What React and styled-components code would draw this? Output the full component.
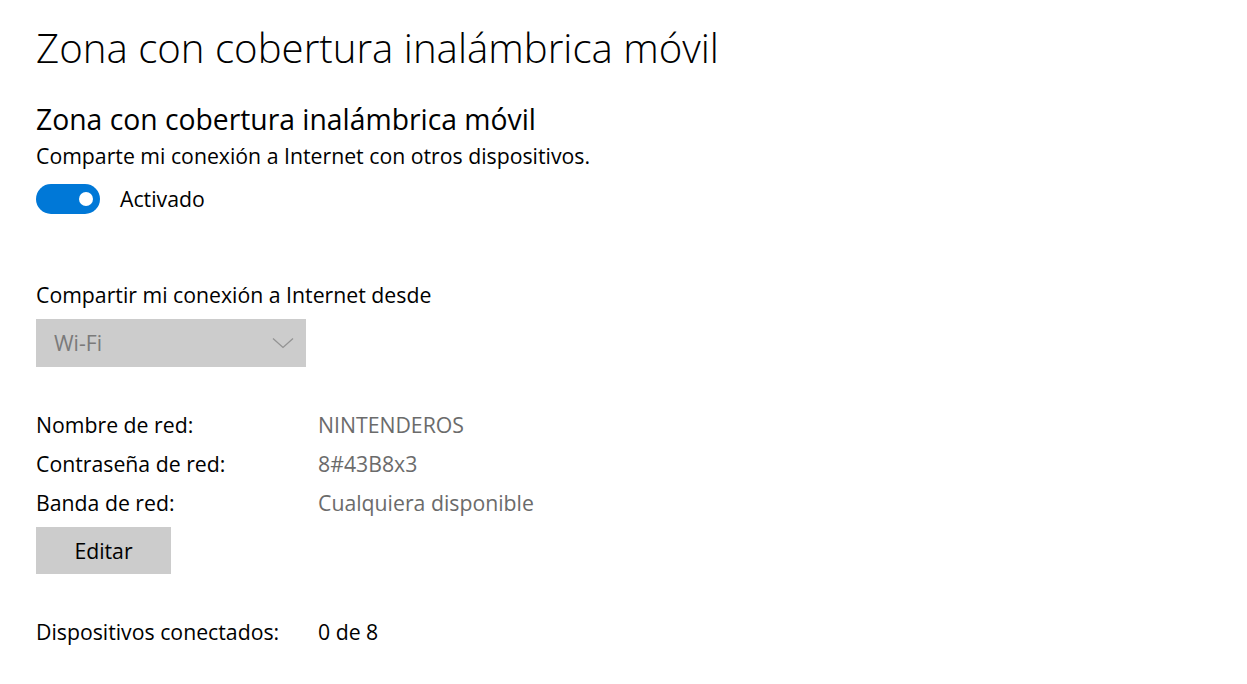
import React from "react";
import styled, { createGlobalStyle } from "styled-components";

const GlobalStyle = createGlobalStyle`
  html, body {
    margin: 0;
    padding: 0;
    background: #ffffff;
  }
  body {
    font-family: "Open Sans", "Noto Sans", sans-serif;
    color: #000000;
    -webkit-font-smoothing: antialiased;
  }
`;

const Page = styled.main`
  display: flex;
  flex-direction: column;
  align-items: flex-start;
  padding: 20px 0 0 36px;
  min-height: 684px;
  box-sizing: border-box;
`;

const PageTitle = styled.h1`
  margin: 0;
  font-size: 40.2px;
  font-weight: 300;
  line-height: 56px;
  color: #000;
`;

const SectionTitle = styled.h2`
  margin: 23px 0 0;
  font-size: 28.3px;
  font-weight: 400;
  line-height: 40px;
  color: #000;
`;

const Text = styled.p`
  margin: ${(p) => p.$top || 0}px 0 0;
  font-size: 21.25px;
  line-height: 30px;
  color: #000;
`;

const ToggleRow = styled.label`
  display: flex;
  align-items: center;
  gap: 20px;
  margin-top: 13px;
  font-size: 21.25px;
  line-height: 30px;
`;

const Track = styled.span`
  position: relative;
  display: block;
  width: 64px;
  height: 30px;
  border-radius: 15px;
  background: #0078d7;
  box-sizing: border-box;
`;

const Knob = styled.span`
  position: absolute;
  top: 8px;
  right: 7px;
  width: 14px;
  height: 14px;
  border-radius: 50%;
  background: #ffffff;
`;

const Select = styled.div`
  display: flex;
  align-items: center;
  justify-content: space-between;
  margin-top: 9px;
  width: 270px;
  height: 48px;
  padding: 0 12px 0 18px;
  box-sizing: border-box;
  background: #cccccc;
  color: #7a7a7a;
  font-size: 21.25px;
  line-height: 48px;
`;

const InfoList = styled.dl`
  display: grid;
  grid-template-columns: 282px auto;
  margin: 38px 0 0;
  font-size: 21.25px;
  line-height: 39px;
`;

const Term = styled.dt`
  margin: 0;
  color: #000;
`;

const Value = styled.dd`
  margin: 0;
  color: ${(p) => (p.$muted ? "#6b6b6b" : "#000")};
`;

const Button = styled.button`
  margin-top: 5px;
  width: 135px;
  height: 47px;
  padding: 0;
  border: none;
  background: #cccccc;
  font-family: inherit;
  font-size: 21.25px;
  line-height: 47px;
  color: #000;
`;

const DeviceList = styled(InfoList)`
  margin-top: 43px;
  line-height: 30px;
`;

const Chevron = () => (
  <svg width="22" height="12" viewBox="0 0 22 12" fill="none">
    <path d="M1 1.5 L11 10.5 L21 1.5" stroke="#939393" strokeWidth="1.3" />
  </svg>
);

export default function App() {
  return (
    <>
      <GlobalStyle />
      <Page>
        <PageTitle>Zona con cobertura inalámbrica móvil</PageTitle>
        <SectionTitle>Zona con cobertura inalámbrica móvil</SectionTitle>
        <Text $top={2}>Comparte mi conexión a Internet con otros dispositivos.</Text>
        <ToggleRow>
          <Track>
            <Knob />
          </Track>
          Activado
        </ToggleRow>
        <Text $top={66}>Compartir mi conexión a Internet desde</Text>
        <Select>
          <span>Wi-Fi</span>
          <Chevron />
        </Select>
        <InfoList>
          <Term>Nombre de red:</Term>
          <Value $muted>NINTENDEROS</Value>
          <Term>Contraseña de red:</Term>
          <Value $muted>8#43B8x3</Value>
          <Term>Banda de red:</Term>
          <Value $muted>Cualquiera disponible</Value>
        </InfoList>
        <Button>Editar</Button>
        <DeviceList>
          <Term>Dispositivos conectados:</Term>
          <Value>0 de 8</Value>
        </DeviceList>
      </Page>
    </>
  );
}
